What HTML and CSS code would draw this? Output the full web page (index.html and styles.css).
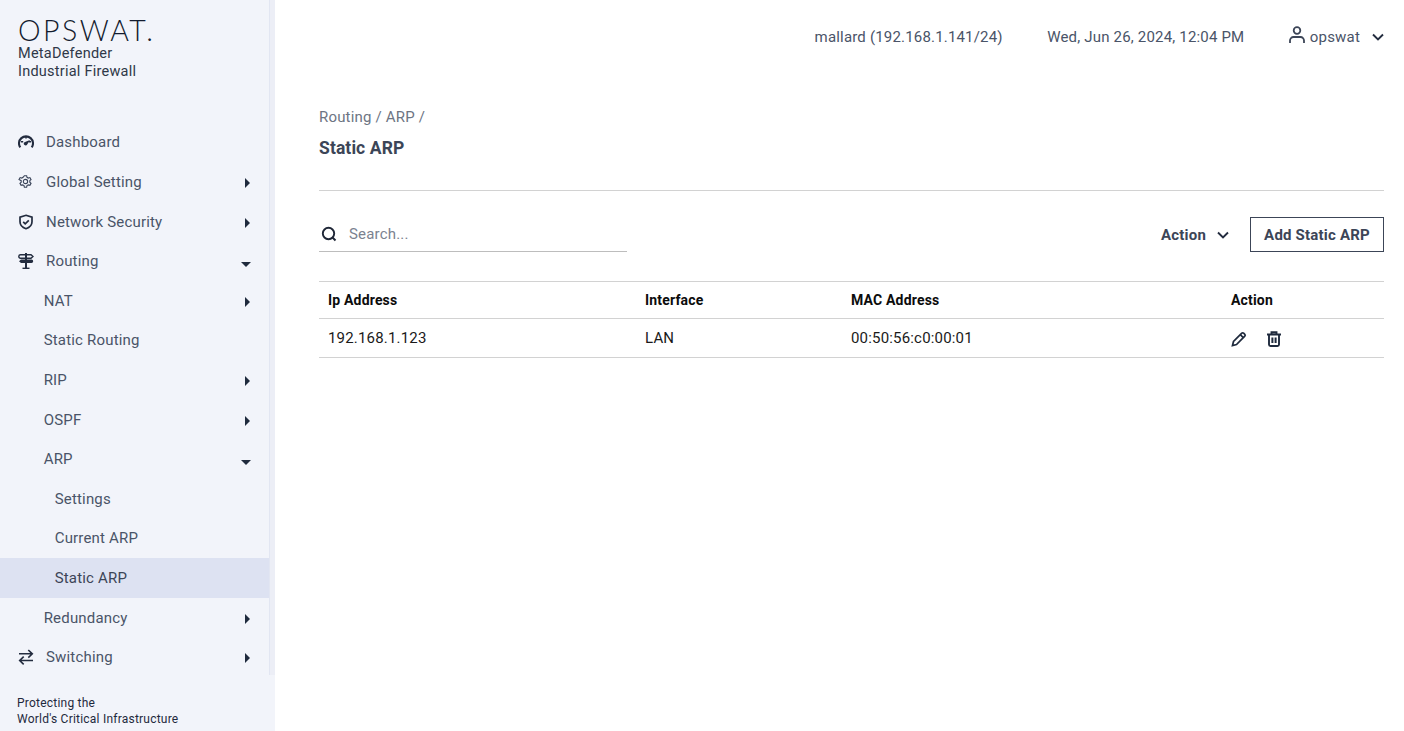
FILE: index.html
```html
<!DOCTYPE html>
<html lang="en">
<head>
<meta charset="utf-8">
<title>Static ARP</title>
<link rel="stylesheet" href="styles.css">
</head>
<body>
<div class="app">
  <aside class="sidebar">
    <div class="side-panel">
      <div class="brand">
        <div class="logo">OPSWAT.</div>
        <div class="product">MetaDefender<br>Industrial Firewall</div>
      </div>
      <nav class="nav">
        <a class="row"><svg class="ico" viewBox="0 0 16 16"><path d="M2.300 13.400A7 7 0 1 1 13.700 13.400" fill="none" stroke="#232c3f" stroke-width="2.100"/><path d="M3 7.800h2.200M10.800 7.800H13M8 2.500v2" stroke="#232c3f" stroke-width="1.600"/><path d="M5.700 9.300a1.900 1.900 0 0 0 3.500 1.200L12 6 7 8a1.900 1.900 0 0 0-1.300 1.300z" fill="#232c3f"/></svg><span class="label">Dashboard</span></a>
        <a class="row"><svg class="ico gear" viewBox="0 0 16 16" fill="none" stroke="#3a4459" stroke-width="1.200"><path d="M6.800 1.800h2.400l.4 1.700 1.400.8 1.700-.5 1.200 2.100-1.300 1.200v1.700l1.300 1.200-1.200 2.100-1.700-.5-1.400.8-.4 1.700H6.800l-.4-1.700-1.400-.8-1.700.5-1.200-2.100 1.300-1.200V7.100L1.100 5.900l1.200-2.100 1.700.5 1.400-.8z"/><circle cx="8" cy="8" r="2.300"/></svg><span class="label">Global Setting</span><i class="caret-r"></i></a>
        <a class="row"><svg class="ico" viewBox="0 0 16 16" fill="none" stroke="#232c3f" stroke-width="1.700"><path d="M8 1.300l6 1.900v4.500c0 3.300-2.500 5.800-6 7-3.500-1.200-6-3.700-6-7V3.200z"/><path d="M5.200 7.800l2 2 3.600-3.500"/></svg><span class="label">Network Security</span><i class="caret-r"></i></a>
        <a class="row"><svg class="ico" viewBox="0 0 16 16" fill="#232c3f"><rect x="7" y="0" width="2" height="16"/><rect x="4.500" y="14.600" width="7" height="1.400"/><path d="M2.500 1.800H13l2 1.700-2 1.700H2.500a1.700 1.700 0 0 1 0-3.400z" fill="#f2f4fa" stroke="#232c3f" stroke-width="1.400"/><rect x="7" y="1.500" width="2" height="4"/><path d="M3 6.500h10.500a1.700 1.700 0 0 1 0 3.400H3L1 8.200z"/></svg><span class="label">Routing</span><i class="caret-d"></i></a>
        <a class="row sub"><span class="label">NAT</span><i class="caret-r"></i></a>
        <a class="row sub"><span class="label">Static Routing</span></a>
        <a class="row sub"><span class="label">RIP</span><i class="caret-r"></i></a>
        <a class="row sub"><span class="label">OSPF</span><i class="caret-r"></i></a>
        <a class="row sub"><span class="label">ARP</span><i class="caret-d"></i></a>
        <a class="row subsub"><span class="label">Settings</span></a>
        <a class="row subsub"><span class="label">Current ARP</span></a>
        <a class="row subsub active"><span class="label">Static ARP</span></a>
        <a class="row sub"><span class="label">Redundancy</span><i class="caret-r"></i></a>
        <a class="row"><svg class="ico" viewBox="0 0 16 16" fill="none" stroke="#232c3f" stroke-width="1.600"><path d="M1 4.800h13.500M10.300 1l4 3.800-4 3.800"/><path d="M15 11.500H1.500M5.700 7.700l-4 3.800 4 3.800"/></svg><span class="label">Switching</span><i class="caret-r"></i></a>
      </nav>
      <div class="tagline">Protecting the<br>World's Critical Infrastructure</div>
    </div>
    <div class="scrolltrack"></div>
  </aside>
  <main class="main">
    <header class="topbar">
      <span>mallard (192.168.1.141/24)</span>
      <span>Wed, Jun 26, 2024, 12:04 PM</span>
      <span class="user">
        <svg class="user-ico" viewBox="0 0 16 17" fill="none" stroke="#3c4557" stroke-width="1.800"><circle cx="8" cy="4.500" r="3.300"/><path d="M1 17v-2.500a3.500 3.500 0 0 1 3.500-3.500h7a3.500 3.500 0 0 1 3.500 3.500V17"/></svg>
        <span class="user-name">opswat</span>
        <svg class="chev" viewBox="0 0 12 8" fill="none" stroke="#232c3f" stroke-width="1.900"><path d="M1 1.500l5 5 5-5"/></svg>
      </span>
    </header>
    <section class="content">
      <div class="crumbs">Routing / ARP /</div>
      <h1 class="title">Static ARP</h1>
      <hr class="rule">
      <div class="toolbar">
        <label class="search">
          <svg class="search-ico" viewBox="0 0 16 16" fill="none" stroke="#1f2737" stroke-width="1.900"><circle cx="7.500" cy="7.500" r="5.700"/><path d="M11.500 11.500l3 3"/></svg>
          <span class="placeholder">Search...</span>
        </label>
        <div class="actions">
          <span class="action-menu">Action<svg class="chev" viewBox="0 0 12 8" fill="none" stroke="#232c3f" stroke-width="1.900"><path d="M1 1.500l5 5 5-5"/></svg></span>
          <button class="btn">Add Static ARP</button>
        </div>
      </div>
      <table class="tbl">
        <thead>
          <tr><th class="c1">Ip Address</th><th class="c2">Interface</th><th class="c3">MAC Address</th><th>Action</th></tr>
        </thead>
        <tbody>
          <tr>
            <td>192.168.1.123</td><td>LAN</td><td>00:50:56:c0:00:01</td>
            <td>
              <div class="row-icons">
                <svg class="act" viewBox="0 0 16 16" fill="none" stroke="#1f2a3d" stroke-width="1.700"><path d="M1.500 14.500l1-4L10.800 2.200a1.300 1.300 0 0 1 1.800 0l1.200 1.200a1.300 1.300 0 0 1 0 1.800L5.500 13.500z"/><path d="M9.300 3.700l3 3"/></svg>
                <svg class="act" viewBox="0 0 16 16" fill="none" stroke="#1f2a3d" stroke-width="1.900"><path d="M1 3.500h14M5.500 3.500V1.200h5v2.300M3 4v9.500A1.500 1.500 0 0 0 4.500 15h7a1.500 1.500 0 0 0 1.500-1.500V4"/><path d="M6.400 6.500v5.500M9.600 6.500v5.500" stroke-width="2"/></svg>
              </div>
            </td>
          </tr>
        </tbody>
      </table>
    </section>
  </main>
</div>
</body>
</html>
```

FILE: styles.css
```css
* { box-sizing: border-box; }
html, body { margin: 0; height: 100%; overflow: hidden; }
body { font-family: Roboto, "Liberation Sans", sans-serif; font-size: 15px; letter-spacing: 0.18px; color: #3c4557; background: #fff; }
.app { display: flex; height: 731px; }

.sidebar { width: 275px; flex: none; display: flex; background: #f2f4fa; }
.side-panel { width: 269px; display: flex; flex-direction: column; height: 100%; }
.scrolltrack { width: 6px; height: 675px; background: #eceef6; border-left: 1px solid #e2e6f2; }

.brand { height: 122.600px; padding: 15px 0 0 18px; }
.logo { font-family: Lato, "Open Sans", sans-serif; font-weight: 300; font-size: 28.500px; line-height: 30px; letter-spacing: 2.500px; color: #121b2e; white-space: nowrap; }
.product { font-size: 14.500px; line-height: 18px; letter-spacing: 0.24px; color: #2f3848; }

.nav { display: flex; flex-direction: column; }
.row { display: flex; align-items: center; height: 39.600px; padding: 0 18px; color: #4a5468; font-size: 15px; }
.ico { width: 16px; height: 16px; flex: none; margin-right: 12px; }
.gear { width: 15px; height: 15px; margin-right: 13px; }
.label { flex: 1; }
.sub { padding-left: 43.700px; }
.subsub { padding-left: 54.700px; }
.active { background: #dde2f2; color: #3c4557; }
.caret-r { width: 0; height: 0; border-left: 5px solid #1f2a3d; border-top: 5px solid transparent; border-bottom: 5px solid transparent; margin: 2px 1px 0 0; }
.caret-d { width: 0; height: 0; border-top: 5px solid #1f2a3d; border-left: 5px solid transparent; border-right: 5px solid transparent; margin: 6px 0 0 0; }
.tagline { margin-top: 17.800px; padding-left: 17px; font-size: 12px; line-height: 16px; letter-spacing: 0.22px; color: #1f2a3d; }

.main { flex: 1; min-width: 0; padding: 0 20px 0 44px; }
.topbar { height: 73px; display: flex; justify-content: flex-end; align-items: center; gap: 44.500px; color: #4a5468; font-size: 15px; }
.user { display: flex; align-items: center; }
.user-ico { width: 16px; height: 17px; margin: -5px 5px 0 0; }
.user-name { margin-right: 12px; }
.chev { width: 12px; height: 8px; flex: none; }

.content { display: flex; flex-direction: column; }
.crumbs { margin-top: 34px; line-height: 20px; color: #6d7583; font-size: 15px; }
.title { margin: 10.500px 0 0; font-size: 17.500px; line-height: 20px; font-weight: 700; color: #3c4557; letter-spacing: 0.1px; }
.rule { width: 100%; margin: 32.500px 0 0; border: 0; border-top: 1px solid #d2d2d2; }
.toolbar { display: flex; justify-content: space-between; align-items: flex-start; margin-top: 26px; }
.search { width: 308px; height: 35px; display: flex; align-items: center; border-bottom: 1px solid #bdbdbd; padding-left: 2px; }
.search-ico { width: 16px; height: 16px; margin-right: 12px; }
.placeholder { color: #7b8290; font-size: 15px; }
.actions { display: flex; align-items: center; gap: 21px; }
.action-menu { display: flex; align-items: center; gap: 11px; font-weight: 700; font-size: 15px; color: #3c4557; }
.btn { width: 134px; height: 35px; background: #fff; border: 1px solid #3c4557; border-radius: 0; font: 700 15px Roboto, sans-serif; letter-spacing: 0.2px; color: #3c4557; padding: 0; }

.tbl { width: 100%; margin-top: 29px; border-collapse: collapse; table-layout: fixed; color: #1a1a1a; font-size: 15px; }
.tbl th { height: 37px; padding: 0 9px; text-align: left; font-size: 14px; font-weight: 700; color: #0c0c0c; border-top: 1px solid #d2d2d2; border-bottom: 1px solid #d2d2d2; }
.tbl td { height: 39px; padding: 0 9px; border-bottom: 1px solid #d2d2d2; }
.c1 { width: 317px; }
.c2 { width: 206px; }
.c3 { width: 380px; }
.row-icons { display: flex; align-items: center; gap: 19px; margin-top: 2px; }
.act { width: 16px; height: 16px; }
```
